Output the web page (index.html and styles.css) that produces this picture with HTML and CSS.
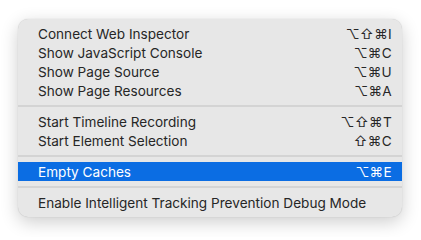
FILE: index.html
```html
<!DOCTYPE html>
<html>
<head>
<meta charset="utf-8">
<link rel="stylesheet" href="styles.css">
</head>
<body>
<div class="menu">
  <div class="item"><span class="label">Connect Web Inspector</span><span class="key">⌥⇧⌘I</span></div>
  <div class="item"><span class="label">Show JavaScript Console</span><span class="key">⌥⌘C</span></div>
  <div class="item"><span class="label">Show Page Source</span><span class="key">⌥⌘U</span></div>
  <div class="item"><span class="label">Show Page Resources</span><span class="key">⌥⌘A</span></div>
  <div class="sep"></div>
  <div class="item"><span class="label">Start Timeline Recording</span><span class="key">⌥⇧⌘T</span></div>
  <div class="item"><span class="label">Start Element Selection</span><span class="key">⇧⌘C</span></div>
  <div class="sep"></div>
  <div class="item active"><span class="label">Empty Caches</span><span class="key">⌥⌘E</span></div>
  <div class="sep"></div>
  <div class="item"><span class="label">Enable Intelligent Tracking Prevention Debug Mode</span></div>
</div>
</body>
</html>
```
FILE: styles.css
```css
html, body {
  margin: 0;
  padding: 0;
  background: #ffffff;
}
body {
  padding: 19px 19px 20px 18px;
  font-family: Inter, "Noto Sans", "DejaVu Sans", sans-serif;
}
.menu {
  width: 384px;
  background: #e7e7e7;
  border-radius: 10px;
  padding: 5px 0;
  box-shadow: 0 5px 18px rgba(0,0,0,0.2), 0 0 1px rgba(0,0,0,0.22);
}
.item {
  display: flex;
  justify-content: space-between;
  align-items: center;
  height: 19px;
  padding: 0 10px 0 20px;
  font-size: 13.6px;
  color: #262626;
}
.item.active {
  background: #0b6de3;
  color: #ffffff;
}
.key {
  letter-spacing: 0.3px;
}
.sep {
  height: 2px;
  background: #d4d4d4;
  margin: 5px 0;
}
```
